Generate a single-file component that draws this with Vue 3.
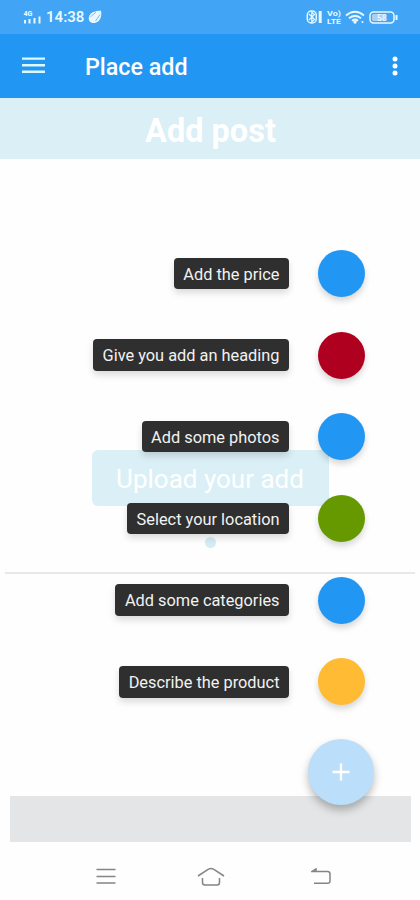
<script setup>
const actions = [
  { label: 'Add the price', tone: 'blue' },
  { label: 'Give you add an heading', tone: 'red' },
  { label: 'Add some photos', tone: 'blue' },
  { label: 'Select your location', tone: 'green' },
  { label: 'Add some categories', tone: 'blue' },
  { label: 'Describe the product', tone: 'amber' },
]
</script>

<template>
  <div class="screen">
    <header class="status">
      <svg class="signal" width="19" height="16" viewBox="0 0 19 16">
        <text x="0.5" y="6.5" font-size="7" font-weight="800" textLength="9" lengthAdjust="spacingAndGlyphs" fill="currentColor">4G</text>
        <path d="M2 11v3.500M6.500 10v4.500M11.500 9v5.500M16.500 7.500v7" stroke="currentColor" stroke-width="2" />
      </svg>
      <span class="time">14:38</span>
      <svg class="leaf" width="14" height="14" viewBox="0 0 14 14">
        <path d="M.8 7.500C1.800 2.500 7 .5 13 .8c1 5-.3 10.500-5.500 12C3.500 13.800.200 11.500.8 7.500z" fill="currentColor" />
        <path d="M2.500 6.800L8 2.200M7.500 11L12 4.500" stroke="#65b3f7" stroke-width=".9" />
      </svg>
      <svg class="system" width="94" height="18" viewBox="0 0 94 18">
        <g fill="none" stroke="currentColor">
          <rect x="1.300" y="3" width="9" height="12" rx="4" stroke-width="1.500" />
          <path d="M3 6l5.500 5.500L5.800 14V4l2.700 2.500L3 12" stroke-width="1.200" />
          <path d="M14.200 3v12" stroke-width="3" />
          <path d="M40 7.500Q49 0 58 7.500M43 10.300Q49 5.500 55 10.300M46 12.800Q49 10.500 52 12.800" stroke-width="2" />
          <rect x="64" y="4" width="24" height="11" rx="3.500" stroke-width="1.500" />
          <path d="M90.500 7v5" stroke-width="2" />
        </g>
        <circle cx="49" cy="14" r="1.700" fill="currentColor" />
        <circle cx="56.500" cy="14" r="1" fill="currentColor" />
        <rect x="66" y="6" width="13" height="7" rx="1.500" fill="#a9d0f3" />
        <g fill="currentColor" font-weight="700">
          <text x="21" y="8" font-size="6.500" textLength="14" lengthAdjust="spacingAndGlyphs">Vo)</text>
          <text x="21" y="16" font-size="6.500" textLength="14" lengthAdjust="spacingAndGlyphs">LTE</text>
          <text x="71" y="12.500" font-size="8.500">58</text>
        </g>
      </svg>
    </header>

    <div class="appbar">
      <svg class="burger" width="24" height="18" viewBox="0 0 24 18">
        <path d="M0 2.600h23M0 9.300h23M0 15.700h23" stroke="currentColor" stroke-width="2.400" />
      </svg>
      <h1>Place add</h1>
      <svg class="more" width="6" height="20" viewBox="0 0 6 20">
        <circle cx="3" cy="3" r="2.500" /><circle cx="3" cy="10" r="2.500" /><circle cx="3" cy="17" r="2.500" />
      </svg>
    </div>

    <main class="page">
      <h2 class="banner">Add post</h2>
      <button class="upload">Upload your add</button>
      <span class="dot"></span>
      <hr />
      <div class="field"></div>
    </main>

    <nav class="nav">
      <svg width="20" height="18" viewBox="0 0 20 18"><path d="M.5 1.500h19M.5 8.500h19M.5 15h19" /></svg>
      <svg width="28" height="20" viewBox="0 0 28 20"><path d="M1 9L11.500 2.200Q14 .8 16.500 2.200L27 9M5.500 11v4.500Q5.500 18 8 18h12q2.500 0 2.500-2.500V11" /></svg>
      <svg class="back" width="20" height="18" viewBox="0 0 20 18"><path d="M1 3.500h15.500Q19 3.500 19 6v7q0 2.300-2.300 2.300H3M5 1L1 3.500h4z" /></svg>
    </nav>

    <div class="dial">
      <div v-for="a in actions" :key="a.label" class="action">
        <span class="label">{{ a.label }}</span>
        <span class="mini" :class="a.tone"></span>
      </div>
      <button class="fab">
        <svg width="18" height="18" viewBox="0 0 18 18"><path d="M9 .5v17M.5 9h17" stroke="currentColor" stroke-width="2.400" /></svg>
      </button>
    </div>
  </div>
</template>

<style>
body { margin: 0; background: #fff; }
</style>

<style scoped>
.screen {
  position: relative;
  display: flex;
  flex-direction: column;
  width: 420px;
  height: 900px;
  overflow: hidden;
  background: #fefefe;
  font-family: Roboto, sans-serif;
}
.screen * { box-sizing: border-box; }
svg { display: block; flex: none; }
button { border: 0; padding: 0; font-family: inherit; }
.status {
  display: flex;
  align-items: center;
  height: 34px;
  padding: 0 20.5px 0 23px;
  background: #42a4f5;
  color: #e8f8ff;
}
.signal { margin-top: -1px; }
.time { margin-left: 4px; font-size: 15px; font-weight: 600; line-height: 34px; }
.leaf { margin-left: 4px; }
.system { margin-left: auto; }
.appbar {
  display: flex;
  align-items: center;
  height: 64px;
  padding: 0 22px;
  background: #2196f3;
  color: #fff;
}
.burger { color: #dcf9ff; margin-top: -2px; }
h1 { margin: 2px 0 0 39px; font-size: 23.3px; font-weight: 500; line-height: 30px; }
.more { margin-left: auto; fill: #fff; }
.page { display: flex; flex: none; flex-direction: column; align-items: center; height: 744px; }
.banner {
  width: 100%;
  height: 61px;
  margin: 0;
  padding-left: 1px;
  background: #daeff6;
  color: #fff;
  text-align: center;
  font-size: 32.5px;
  line-height: 66px;
  font-weight: 700;
}
.upload {
  width: 237px;
  height: 56px;
  margin-top: 291px;
  border-radius: 6px;
  background: #daeff6;
  color: #fff;
  font-size: 26px;
  line-height: 58px;
}
.dot { width: 11px; height: 11px; margin-top: 31px; border-radius: 50%; background: #d4ecf5; }
hr { width: 410px; height: 2px; margin: 24px 0 0; border: 0; background: #e7e8e9; }
.field { width: 401px; height: 46px; margin-top: auto; background: #e3e5e6; }
.nav {
  display: grid;
  grid-template-columns: 20px 28px 20px;
  column-gap: 81px;
  align-items: center;
  height: 58px;
  padding: 11px 0 0 96px;
}
.nav svg { fill: none; stroke: #858585; stroke-width: 1.5; }
.nav .back { margin-left: 5px; }
.dial {
  position: absolute;
  right: 46px;
  top: 232.5px;
  display: flex;
  flex-direction: column;
  align-items: flex-end;
}
.action { display: flex; align-items: center; height: 81.7px; padding-right: 9px; }
.label {
  height: 31.5px;
  padding: 0 9.5px;
  border-radius: 4px;
  background: #2f2f2f;
  color: #f2f2f2;
  font-size: 16.35px;
  line-height: 33px;
  white-space: nowrap;
  box-shadow: 0 4px 7px rgba(0, 0, 0, .14);
}
.mini { width: 47px; height: 47px; margin-left: 29px; border-radius: 50%; box-shadow: 0 4px 6px rgba(0, 0, 0, .16); }
.blue { background: #2196f3; }
.red { background: #b00020; }
.green { background: #669900; }
.amber { background: #ffbb33; }
.fab {
  display: grid;
  place-items: center;
  width: 66px;
  height: 66px;
  margin-top: 16px;
  border-radius: 50%;
  background: #bbdefb;
  color: #fff;
  box-shadow: 0 5px 8px rgba(0, 0, 0, .27);
}
</style>
